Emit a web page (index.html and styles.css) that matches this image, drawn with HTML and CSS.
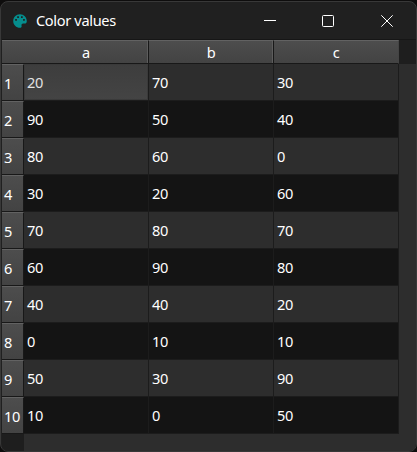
FILE: index.html
```
<!DOCTYPE html>
<html lang="en">
<head>
<meta charset="utf-8">
<title>Color values</title>
<link rel="stylesheet" href="styles.css">
</head>
<body>
<div class="window">
  <header class="titlebar">
    <svg class="palette" viewBox="0 0 14 14"><path fill="#058d8d" fill-rule="evenodd" d="M7 .2C3 .2.2 3.2.2 7S3.2 13.8 7 13.8c1.2 0 1.8-.8 1.6-1.8-.4-1.4.2-2.4 1.6-2.4h1.4c1.3 0 2.2-1 2.2-2.4C13.8 3.2 10.8.2 7 .2zM2.2 5h1.7v1.7H2.2zM4.2 2.2h1.7v1.7H4.2zM8 2.2h1.7v1.7H8zM10.1 5h1.7v1.7h-1.7z"/></svg>
    <h1 class="title">Color values</h1>
    <div class="controls">
      <svg viewBox="0 0 12 12"><path d="M0 5.5h12"/></svg>
      <svg viewBox="0 0 12 12"><rect x=".5" y=".5" width="11" height="11" rx="1"/></svg>
      <svg class="close" viewBox="0 0 12 12"><path d="M.3.3l11.4 11.4M11.7.3L.3 11.7"/></svg>
    </div>
  </header>
  <main class="view">
    <table class="grid">
      <thead><tr><th class="corner"></th><th>a</th><th>b</th><th>c</th></tr></thead>
      <tbody>
        <tr><th>1</th><td class="current">20</td><td>70</td><td>30</td></tr>
        <tr><th>2</th><td>90</td><td>50</td><td>40</td></tr>
        <tr><th>3</th><td>80</td><td>60</td><td>0</td></tr>
        <tr><th>4</th><td>30</td><td>20</td><td>60</td></tr>
        <tr><th>5</th><td>70</td><td>80</td><td>70</td></tr>
        <tr><th>6</th><td>60</td><td>90</td><td>80</td></tr>
        <tr><th>7</th><td>40</td><td>40</td><td>20</td></tr>
        <tr><th>8</th><td>0</td><td>10</td><td>10</td></tr>
        <tr><th>9</th><td>50</td><td>30</td><td>90</td></tr>
        <tr><th>10</th><td>10</td><td>0</td><td>50</td></tr>
      </tbody>
    </table>
  </main>
</div>
</body>
</html>
```
FILE: styles.css
```
* { box-sizing: border-box; }
body {
  margin: 0;
  height: 452px;
  padding-top: 1px;
  overflow: hidden;
  background: #0e0d0d;
  color: #fff;
  font: 14.6px/20px "Noto Sans", "Open Sans", sans-serif;
  letter-spacing: -0.35px;
}
.window {
  width: 417px;
  height: 451px;
  border: 1px solid #383838;
  border-radius: 8px;
  background: #202020;
  overflow: hidden;
  display: flex;
  flex-direction: column;
}
.titlebar {
  flex: 0 0 37px;
  display: flex;
  align-items: center;
  padding: 0 23px 0 12px;
}
.palette { width: 14px; height: 14px; }
.title { margin: -1px 0 0 9px; font-size: 14.6px; line-height: 20px; font-weight: 400; letter-spacing: -0.35px; }
.controls { display: flex; gap: 46px; margin-left: auto; }
.controls svg { width: 12px; height: 12px; fill: none; stroke: #fff; stroke-width: 1; }
.controls .close { margin-left: 1px; }
.view {
  flex: 1;
  margin: 0 0 0 1px;
  border-top: 1px solid #161616;
  background:
    linear-gradient(#1e1e1e, #1e1e1e) 0 0 / 100% 24px no-repeat,
    linear-gradient(#1e1e1e, #1e1e1e) 0 0 / 22px 100% no-repeat,
    #2d2d2d;
}
.grid { width: 397px; table-layout: fixed; border-collapse: separate; border-spacing: 0; }
th {
  height: 37px;
  padding: 1px 0 0 2px;
  font-weight: 400;
  text-align: left;
  border-top: 1px solid #626262;
  border-right: 1px solid #181818;
  border-bottom: 1px solid #181818;
  background: linear-gradient(#4d4d4d, #434343);
}
thead th {
  height: 24px;
  padding: 0;
  text-align: center;
  box-shadow: inset -1px 0 #5d5d5d;
}
thead th:last-child { border-right-color: #444; box-shadow: none; }
thead .corner { width: 22px; border-right: 0; box-shadow: none; }
td {
  height: 37px;
  padding: 0 3px;
  background: #2d2d2d;
  border-right: 1px solid #1c1c1c;
  border-bottom: 1px solid #1c1c1c;
}
tbody tr:nth-child(even) td { background: #141414; }
tbody .current { background: linear-gradient(#3d3d3d, #444); box-shadow: inset 0 0 0 1px #3a3a3a; color: #e2e2e2; }
```
